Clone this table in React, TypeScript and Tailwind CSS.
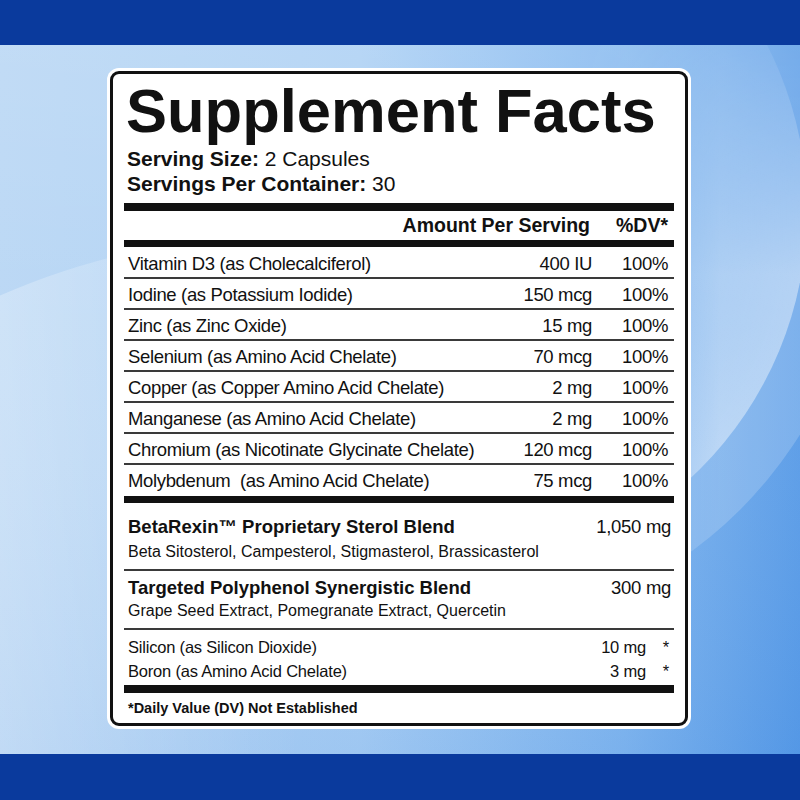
import React from "react";

const minerals: [string, string][] = [
  ["Vitamin D3 (as Cholecalciferol)", "400 IU"],
  ["Iodine (as Potassium Iodide)", "150 mcg"],
  ["Zinc (as Zinc Oxide)", "15 mg"],
  ["Selenium (as Amino Acid Chelate)", "70 mcg"],
  ["Copper (as Copper Amino Acid Chelate)", "2 mg"],
  ["Manganese (as Amino Acid Chelate)", "2 mg"],
  ["Chromium (as Nicotinate Glycinate Chelate)", "120 mcg"],
  ["Molybdenum\u00a0 (as Amino Acid Chelate)", "75 mcg"],
];

const blends = [
  {
    name: "BetaRexin\u2122 Proprietary Sterol Blend",
    amount: "1,050 mg",
    parts: "Beta Sitosterol, Campesterol, Stigmasterol, Brassicasterol",
  },
  {
    name: "Targeted Polyphenol Synergistic Blend",
    amount: "300 mg",
    parts: "Grape Seed Extract, Pomegranate Extract, Quercetin",
  },
];

const others: [string, string][] = [
  ["Silicon (as Silicon Dioxide)", "10 mg"],
  ["Boron (as Amino Acid Chelate)", "3 mg"],
];

function Backdrop() {
  return (
    <svg className="absolute inset-0 h-full w-full" viewBox="0 0 800 709" preserveAspectRatio="none">
      <defs>
        <linearGradient id="base" x1="0" y1="0" x2="800" y2="0" gradientUnits="userSpaceOnUse">
          <stop offset="0" stopColor="#b8d6f4" />
          <stop offset="0.45" stopColor="#acd0f4" />
          <stop offset="0.78" stopColor="#84b8ef" />
          <stop offset="1" stopColor="#5a9ce7" />
        </linearGradient>
        <linearGradient id="vert" x1="0" y1="0" x2="0" y2="709" gradientUnits="userSpaceOnUse">
          <stop offset="0" stopColor="#ffffff" stopOpacity="0.14" />
          <stop offset="0.4" stopColor="#ffffff" stopOpacity="0.04" />
          <stop offset="1" stopColor="#1d6fd8" stopOpacity="0.1" />
        </linearGradient>
        <linearGradient id="leftFade" x1="0" y1="0" x2="300" y2="0" gradientUnits="userSpaceOnUse">
          <stop offset="0" stopColor="#ffffff" stopOpacity="0.28" />
          <stop offset="1" stopColor="#ffffff" stopOpacity="0" />
        </linearGradient>
        <linearGradient id="rightMaskGrad" x1="560" y1="0" x2="720" y2="0" gradientUnits="userSpaceOnUse">
          <stop offset="0" stopColor="#000000" />
          <stop offset="1" stopColor="#ffffff" />
        </linearGradient>
        <linearGradient id="topMaskGrad" x1="0" y1="0" x2="0" y2="230" gradientUnits="userSpaceOnUse">
          <stop offset="0" stopColor="#333333" />
          <stop offset="1" stopColor="#ffffff" />
        </linearGradient>
        <mask id="rightOnly" maskUnits="userSpaceOnUse" x="0" y="0" width="800" height="709">
          <rect width="800" height="709" fill="url(#rightMaskGrad)" />
        </mask>
        <mask id="softTop" maskUnits="userSpaceOnUse" x="0" y="0" width="800" height="709">
          <rect width="800" height="709" fill="url(#topMaskGrad)" />
        </mask>
        <radialGradient id="disk" cx="442" cy="166" r="365" gradientUnits="userSpaceOnUse">
          <stop offset="0.5" stopColor="#ffffff" stopOpacity="0.12" />
          <stop offset="1" stopColor="#ffffff" stopOpacity="0.42" />
        </radialGradient>
      </defs>
      <rect width="800" height="709" fill="url(#base)" />
      <rect width="800" height="709" fill="url(#vert)" />
      <circle cx="283" cy="893" r="702" fill="url(#leftFade)" />
      <g mask="url(#softTop)">
        <g mask="url(#rightOnly)">
          <circle cx="442" cy="166" r="422" fill="#ffffff" fillOpacity="0.18" />
          <circle cx="442" cy="166" r="365" fill="url(#disk)" />
        </g>
      </g>
    </svg>
  );
}

export default function App() {
  return (
    <div className="flex h-[800px] w-[800px] flex-col overflow-hidden font-['Liberation_Sans',Arial,sans-serif] text-[#111]">
      <div className="h-[45px] bg-[#0a3a9d]" />

      <div className="relative h-[709px]">
        <Backdrop />

        <div className="relative ml-[110px] mt-[26px] w-[578px] rounded-[9px] border-[3px] border-[#111] bg-white px-[11px] pb-[6px] pt-[6px] ring-[3px] ring-white">
          <h1 className="pl-[2px] text-[61.5px] font-bold leading-[61px]">Supplement Facts</h1>

          <div className="mt-[5px] pl-[3px] text-[21px] leading-[25px]">
            <p>
              <span className="font-bold">Serving Size:</span> 2 Capsules
            </p>
            <p>
              <span className="font-bold">Servings Per Container:</span> 30
            </p>
          </div>

          <div className="mt-[7px] h-[8px] bg-[#111]" />

          <div className="flex h-[29px] justify-end pr-[6px] text-[19.5px] font-bold leading-[29px]">
            <span className="mr-[2px]">Amount Per Serving</span>
            <span className="w-[76px] text-right">%DV*</span>
          </div>

          <div className="h-[7px] bg-[#111]" />

          {minerals.map(([name, amount], i) => (
            <div
              key={name}
              className={
                i === 0
                  ? "flex h-[32px] border-b-2 border-[#3a3a3a] pl-[4px] pr-[6px] pt-[5px] text-[18.5px] leading-[24px] tracking-[-0.35px]"
                  : i === minerals.length - 1
                  ? "flex h-[31px] pl-[4px] pr-[6px] pt-[4px] text-[18.5px] leading-[24px] tracking-[-0.35px]"
                  : "flex h-[31px] border-b-2 border-[#3a3a3a] pl-[4px] pr-[6px] pt-[4px] text-[18.5px] leading-[24px] tracking-[-0.35px]"
              }
            >
              <span className="flex-1 whitespace-nowrap">{name}</span>
              <span className="text-right">{amount}</span>
              <span className="w-[76px] text-right">100%</span>
            </div>
          ))}

          <div className="h-[7px] bg-[#111]" />

          {blends.map((b, i) => (
            <div
              key={b.name}
              className={
                i === 0
                  ? "border-b-2 border-[#3a3a3a] pb-[7px] pl-[4px] pr-[3px] pt-[13px]"
                  : "border-b-2 border-[#3a3a3a] pb-[7px] pl-[4px] pr-[3px] pt-[6px]"
              }
            >
              <div className="flex justify-between leading-[22px]">
                <span className="text-[18.5px] font-bold">{b.name}</span>
                <span className="text-[18.5px] tracking-[-0.3px]">{b.amount}</span>
              </div>
              <p className={i === 0 ? "mt-[4px] text-[16px] leading-[20px]" : "mt-[2px] text-[16px] leading-[20px]"}>
                {b.parts}
              </p>
            </div>
          ))}

          <div className="pl-[4px] pr-[5px] pt-[5px] text-[16.5px] leading-[24px] tracking-[-0.2px]">
            {others.map(([name, amount]) => (
              <div key={name} className="flex">
                <span className="flex-1">{name}</span>
                <span className="text-right">{amount}</span>
                <span className="w-[23px] text-right">*</span>
              </div>
            ))}
          </div>

          <div className="mt-[2px] h-[8px] bg-[#111]" />

          <p className="mt-[6px] pl-[4px] text-[14.5px] font-bold leading-[18px]">*Daily Value (DV) Not Established</p>
        </div>
      </div>

      <div className="h-[46px] bg-[#0a3a9d]" />
    </div>
  );
}
